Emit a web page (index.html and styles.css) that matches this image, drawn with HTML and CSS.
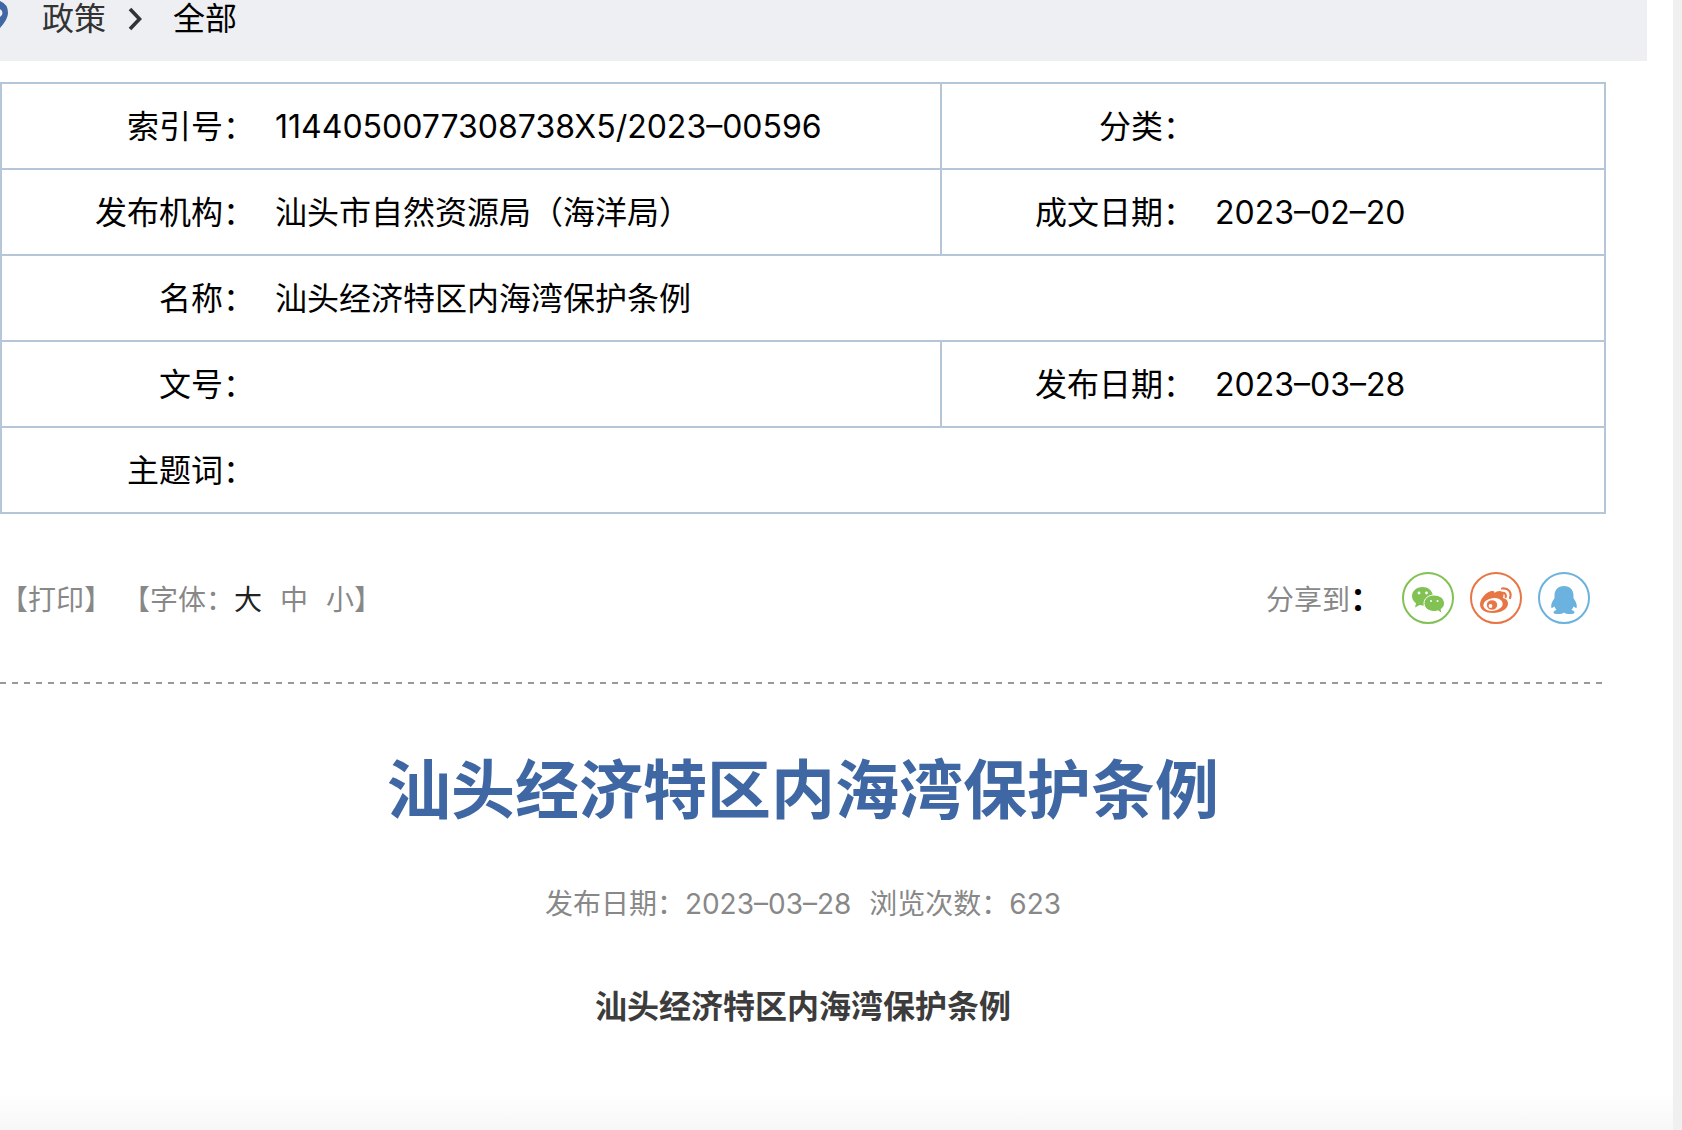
FILE: index.html
```html
<!DOCTYPE html>
<html lang="zh-CN">
<head>
    <meta charset="UTF-8">
    <meta name="viewport" content="width=device-width, initial-scale=1.0">
    <title>汕头经济特区内海湾保护条例</title>
    <link rel="stylesheet" href="styles.css">
</head>
<body>
    <div class="page">
        <nav class="breadcrumb">
            <svg class="pin" width="8" height="30" viewBox="0 0 8 30" aria-hidden="true">
                <path fill="#3e67a3" fill-rule="evenodd" d="M0 1Q8 4 8 13Q8 19 0 28V17Q2.500 15.500 2.500 13Q2.500 10.500 0 9Z"/>
            </svg>
            <a href="#">政策</a>
            <svg class="arrow" width="14" height="24" viewBox="0 0 14 24" aria-hidden="true">
                <path d="M2 2L11.500 12L2 22" fill="none" stroke="#333" stroke-width="3.600"/>
            </svg>
            <a href="#" class="current">全部</a>
        </nav>
        <main class="content">
            <table class="info">
                <tr>
                    <th scope="row">索引号：</th>
                    <td class="wide">1144050077308738X5/2023–00596</td>
                    <th scope="row">分类：</th>
                    <td></td>
                </tr>
                <tr>
                    <th scope="row">发布机构：</th>
                    <td>汕头市自然资源局（海洋局）</td>
                    <th scope="row">成文日期：</th>
                    <td>2023–02–20</td>
                </tr>
                <tr>
                    <th scope="row">名称：</th>
                    <td colspan="3">汕头经济特区内海湾保护条例</td>
                </tr>
                <tr>
                    <th scope="row">文号：</th>
                    <td></td>
                    <th scope="row">发布日期：</th>
                    <td>2023–03–28</td>
                </tr>
                <tr>
                    <th scope="row">主题词：</th>
                    <td colspan="3"></td>
                </tr>
            </table>

            <div class="toolbar">
                <div class="tools">
                    <button type="button">【打印】</button>
                    <div class="font-size">
                        <span>【字体：</span>
                        <button type="button" class="active">大</button>
                        <button type="button">中</button>
                        <span><button type="button">小</button>】</span>
                    </div>
                </div>
                <div class="share">
                    <span class="share-label">分享到<b>：</b></span>
                    <a href="#" class="wechat" aria-label="微信">
                        <svg width="48" height="48" viewBox="0 0 48 48">
                            <g fill="currentColor">
                                <path d="M18.500 13C12.500 13 8 17 8 22C8 25 9.500 27.500 12 29.200L11 33.500L15.600 31C17 31.500 18.500 31.500 20 31.400C22 31 29 22 28.900 21.600C28 16 24 13 18.500 13Z"/>
                                <path stroke="#fff" stroke-width="1" d="M30 21C24.500 21 20 24.500 20 29.300C20 34 24.500 37.500 30 37.500C31.500 37.500 32.800 37.300 34 36.800L38 39.500L37 35.300C39.200 34 40.500 31.800 40.500 29.300C40.500 24.500 35.500 21 30 21Z"/>
                            </g>
                            <g fill="#fff">
                                <circle cx="15" cy="19" r="1.400"/><circle cx="22.500" cy="19" r="1.400"/>
                                <circle cx="27" cy="27" r="1"/><circle cx="33.500" cy="27" r="1"/>
                            </g>
                        </svg>
                    </a>
                    <a href="#" class="weibo" aria-label="微博">
                        <svg width="48" height="48" viewBox="0 0 48 48">
                            <path fill="currentColor" d="M18 17.500C21 16.500 22.500 17 22.500 19C25 16.500 31 16 31.500 20C31.700 22 31 23 31 24C34 24.500 36 26.500 36 29.500C36 35 29 39 21 39C13.500 39 8 35.500 8 30.500C8 25.500 13 19 18 17.500Z"/>
                            <ellipse cx="21" cy="30.500" rx="9.800" ry="6.300" fill="#fff" transform="rotate(-8 21 30.500)"/>
                            <ellipse cx="20" cy="31" rx="5.200" ry="4.800" fill="currentColor"/>
                            <circle cx="18.500" cy="32" r="1.900" fill="#fff"/>
                            <path fill="none" stroke="currentColor" stroke-width="2.200" stroke-linecap="round" d="M30 14.500C36.500 13.500 40 18.500 38 24M30 19C33 18.500 34.500 20.500 33.700 23"/>
                        </svg>
                    </a>
                    <a href="#" class="qq" aria-label="QQ">
                        <svg width="48" height="48" viewBox="0 0 48 48">
                            <path fill="currentColor" d="M24 12C18 12 14.500 16 14.500 21.500C14.500 23 14.700 24 14 25C12 27.500 11 30.500 11.200 33C11.300 34.500 12.500 34 14.500 32.500C15 34 15.800 35 16.500 36C14.500 36.500 13.500 37.500 13.500 38.500C13.500 40.500 22 40.500 24 38.500C26 40.500 34.500 40.500 34.500 38.500C34.500 37.500 33.500 36.500 31.500 36C32.200 35 33 34 33.500 32.500C35.500 34 36.700 34.500 36.800 33C37 30.500 36 27.500 34 25C33.300 24 33.500 23 33.500 21.500C33.500 16 30 12 24 12Z"/>
                        </svg>
                    </a>
                </div>
            </div>
            <div class="divider"></div>

            <article>
                <h1>汕头经济特区内海湾保护条例</h1>
                <div class="meta">
                    <span>发布日期：2023–03–28</span>
                    <span>浏览次数：623</span>
                </div>
                <h2>汕头经济特区内海湾保护条例</h2>
            </article>
        </main>
    </div>
    <div class="scroll-track"></div>
</body>
</html>
```
FILE: styles.css
```css
* {
    box-sizing: border-box;
}
body {
    margin: 0;
    min-height: 100vh;
    display: flex;
    font-family: Inter, "Noto Sans CJK SC", sans-serif;
    font-size: 32px;
    line-height: 48px;
    color: #000;
    background-color: #fff;
}
a {
    color: #333;
    text-decoration: none;
}
button {
    padding: 0;
    border: none;
    background: none;
    font: inherit;
    color: inherit;
    cursor: pointer;
}
.page {
    flex: 1;
    padding-right: 26px;
    background: linear-gradient(to top, #f7f7f7, #fff 36px);
}
.scroll-track {
    width: 9px;
    background-color: #f0f0f0;
}

/* breadcrumb */
.breadcrumb {
    display: flex;
    align-items: flex-start;
    padding-bottom: 23px;
    background-color: #eeeff3;
}
.breadcrumb a {
    line-height: 38px;
}
.pin {
    margin-right: 34px;
}
.arrow {
    margin: 7px 31px 0 22px;
}
.breadcrumb .current {
    color: #000;
}

.content {
    padding: 21px 41px 0 0;
}

/* document info */
.info {
    width: 100%;
    border-collapse: collapse;
    table-layout: fixed;
}
.info th,
.info td {
    height: 86px;
    padding: 2px 0 0;
    border: 2px solid #b5c6d8;
    font-weight: normal;
}
.info th {
    width: 256px;
    padding-right: 2px;
    text-align: right;
    border-right: none;
}
.info td {
    padding-left: 18px;
    text-align: left;
    border-left: none;
}
.info .wide {
    width: 684px;
}

/* print, font size, share */
.toolbar {
    display: flex;
    justify-content: space-between;
    align-items: center;
    padding: 57px 16px 58px 0;
    font-size: 28px;
    color: #888;
}
.tools {
    display: flex;
    gap: 10px;
    padding-top: 4px;
}
.font-size {
    display: flex;
}
.font-size .active {
    margin-right: 18px;
    color: #222;
}
.font-size .active + button {
    margin-right: 18px;
}
.share {
    display: flex;
    align-items: center;
    gap: 16px;
}
.share-label {
    padding: 4px 4px 0 0;
}
.share b {
    font-size: 32px;
    color: #000;
}
.share a {
    display: flex;
    width: 52px;
    height: 52px;
    border: 2px solid currentColor;
    border-radius: 50%;
}
.share .wechat {
    color: #82c153;
}
.share .weibo {
    color: #e87544;
}
.share .qq {
    color: #6bb2df;
}
.divider {
    height: 2px;
    background: repeating-linear-gradient(to right, #999 0, #999 6px, transparent 6px, transparent 12px);
}

/* article */
article {
    text-align: center;
}
h1 {
    margin: 58px 0 0;
    font-size: 64px;
    line-height: 96px;
    color: #3e67a3;
}
.meta {
    display: flex;
    justify-content: center;
    gap: 18px;
    margin-top: 42px;
    font-size: 28px;
    color: #888;
}
h2 {
    margin: 55px 0 0;
    font-size: 32px;
    color: #3c3c3c;
}
```
